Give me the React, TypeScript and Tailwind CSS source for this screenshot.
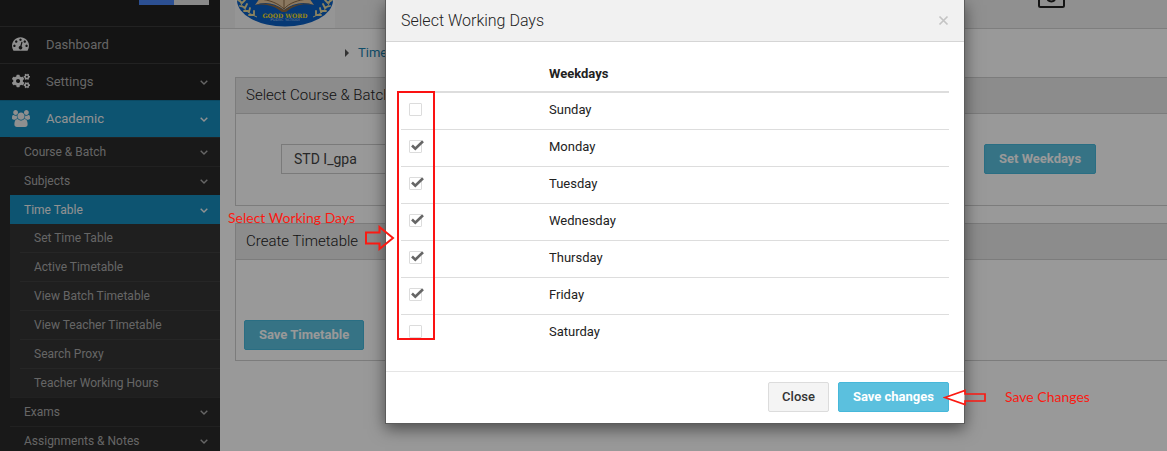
import React, { useState } from 'react';
import { FaCogs } from 'react-icons/fa';

const DAYS = ['Sunday', 'Monday', 'Tuesday', 'Wednesday', 'Thursday', 'Friday', 'Saturday'];

const TIMETABLE_LINKS = [
	'Set Time Table',
	'Active Timetable',
	'View Batch Timetable',
	'View Teacher Timetable',
	'Search Proxy',
	'Teacher Working Hours',
];

const Chevron: React.FC = () => (
	<svg className="h-[5px] w-[8px]" viewBox="0 0 8 5" fill="none" stroke="currentColor">
		<path d="M0.7 0.7L4 3.900 7.300 0.7" strokeWidth={1.4} />
	</svg>
);

const GaugeIcon: React.FC = () => (
	<svg className="h-[14px] w-[17px]" viewBox="0 256 1792 1408" fill="currentColor">
		<path d="M384 1152q0-53-37.5-90.5t-90.5-37.5-90.5 37.5-37.5 90.5 37.5 90.5 90.5 37.5 90.5-37.5 37.5-90.5zm192-448q0-53-37.5-90.5t-90.5-37.5-90.5 37.5-37.5 90.5 37.5 90.5 90.5 37.5 90.5-37.5 37.5-90.5zm428 481l101-382q6-26-7.5-48.5t-38.5-29.5-48 6.5-30 39.5l-101 382q-60 5-107 43.5t-63 98.5q-20 77 20 146t117 89 146-20 89-117q16-60-6-117t-72-91zm660-33q0-53-37.5-90.5t-90.5-37.5-90.5 37.5-37.5 90.5 37.5 90.5 90.5 37.5 90.5-37.5 37.5-90.5zm-640-640q0-53-37.5-90.5t-90.5-37.5-90.5 37.5-37.5 90.5 37.5 90.5 90.5 37.5 90.5-37.5 37.5-90.5zm448 192q0-53-37.5-90.5t-90.5-37.5-90.5 37.5-37.5 90.5 37.5 90.5 90.5 37.5 90.5-37.5 37.5-90.5zm320 448q0 261-141 483-19 29-54 29h-1402q-35 0-54-29-141-221-141-483 0-182 71-348t191-286 286-191 348-71 348 71 286 191 191 286 71 348z" />
	</svg>
);

const UsersIcon: React.FC = () => (
	<svg className="h-[17px] w-[18px]" viewBox="-64 0 1920 1792" fill="currentColor">
		<path d="M529 896q-162 5-265 128h-134q-82 0-138-40.5t-56-118.5q0-353 124-353 6 0 43.5 21t97.500 42.5 119 21.5q67 0 133-23-5 37-5 66 0 139 81 256zm1071 637q0 120-73 189.5t-194 69.5h-874q-121 0-194-69.5t-73-189.5q0-53 3.5-103.5t14-109 26.500-108.5 43-97.500 62-81 85.5-53.5 111.5-20q10 0 43 21.5t73 48 107 48 135 21.5 135-21.5 107-48 73-48 43-21.5q61 0 111.5 20t85.5 53.5 62 81 43 97.5 26.5 108.5 14 109 3.5 103.5zm-1024-1277q0 106-75 181t-181 75-181-75-75-181 75-181 181-75 181 75 75 181zm704 384q0 159-112.5 271.5t-271.5 112.5-271.5-112.5-112.5-271.5 112.5-271.5 271.5-112.5 271.5 112.5 112.5 271.5zm576 225q0 78-56 118.5t-138 40.5h-134q-103-123-265-128 81-117 81-256 0-29-5-66 66 23 133 23 59 0 119-21.5t97.5-42.5 43.5-21q124 0 124 353zm-128-609q0 106-75 181t-181 75-181-75-75-181 75-181 181-75 181 75 75 181z" />
	</svg>
);

interface MainItemProps {
	label: string;
	icon: React.ReactNode;
	active?: boolean;
	expandable?: boolean;
}

const MainItem: React.FC<MainItemProps> = ({ label, icon, active, expandable }) => (
	<a
		href="#"
		className={`flex h-[37px] items-center border-t pr-3 pl-3 text-[13px] ${active ? 'border-[#117aa5] bg-[#178dbd] text-[#f2f2f2]' : 'border-[#3a3a3a] bg-[#222] text-[#aaa]'}`}
	>
		<span className="w-[34px] pb-[2px] text-[#eee]">{icon}</span>
		<span className="flex-1">{label}</span>
		{expandable && <Chevron />}
	</a>
);

const SubItem: React.FC<{ label: string; active?: boolean }> = ({ label, active }) => (
	<a
		href="#"
		className={`ml-[10px] flex h-[29px] items-center border-t pr-3 pl-[14px] text-xs ${active ? 'border-[#178dbd] bg-[#178dbd] text-[#f2f2f2]' : 'border-[#383838] text-[#aaa]'}`}
	>
		<span className="flex-1">{label}</span>
		<Chevron />
	</a>
);

const Sidebar: React.FC = () => (
	<nav className="w-[220px] shrink-0 bg-[#2b2b2b]">
		<div className="flex h-[26px] items-start justify-end bg-[#222] pr-[11px]">
			<div className="h-[5px] w-[35px] bg-[#4a86f5]"></div>
			<div className="h-[5px] w-[35px] bg-[#e4e4e4]"></div>
		</div>
		<MainItem label="Dashboard" icon={<GaugeIcon />} />
		<MainItem label="Settings" icon={<FaCogs size={18} />} expandable />
		<MainItem label="Academic" icon={<UsersIcon />} active expandable />
		<SubItem label="Course & Batch" />
		<SubItem label="Subjects" />
		<SubItem label="Time Table" active />
		<div className="ml-[10px] bg-[#353535] pl-[10px]">
			{TIMETABLE_LINKS.map((item) => (
				<a
					key={item}
					href="#"
					className="flex h-[29px] items-center border-t border-[#404040] pl-[14px] text-xs text-[#aaa] first:h-[28px] first:border-t-0"
				>
					{item}
				</a>
			))}
		</div>
		<SubItem label="Exams" />
		<SubItem label="Assignments & Notes" />
	</nav>
);

const SchoolLogo: React.FC = () => (
	<svg className="h-[28px] w-[100px] bg-[#f9f9f9]" viewBox="0 0 100 28">
		<ellipse cx="50" cy="0" rx="48" ry="26.5" fill="#0a5fc4" />
		<path d="M20 5c10-4 20-2 29 5 9-7 20-9 30-5l-5-7H25z" fill="#e6c9a0" />
		<path d="M49 9C43 3 34 0 25-1M49 9c5-6 14-9 24-10M49 9V0" stroke="#8a6a48" fill="none" />
		<path d="M20 5c10-3 20-1 29 5 9-6 20-8 30-5-10-2-20 0-28 7h-4C40 6 30 3 20 5z" fill="#8f6b42" />
		<path
			d="M5 0c1 7 7 13 17 17M95 0c-1 7-7 13-17 17"
			stroke="#e8dba0"
			strokeWidth="1"
			fill="none"
		/>
		<path
			d="M3 0l3 2M10 0L7 3M5 6l4 1M12 4l-2 4M9 11l4 0M15 8l-1 4M14 15l4 0M19 11l0 4M97 0l-3 2M90 0l3 3M95 6l-4 1M88 4l2 4M91 11l-4 0M85 8l1 4M86 15l-4 0M81 11l0 4"
			stroke="#e8dba0"
			strokeWidth="1.8"
			strokeLinecap="round"
		/>
		<text x="50" y="17.5" textAnchor="middle" fontFamily="DejaVu Serif" fontWeight="bold" fontSize="6" fill="#ffe11a">
			GOOD WORD
		</text>
		<text x="50" y="21" textAnchor="middle" fontFamily="DejaVu Sans" fontSize="4.5" fill="#a9c4ee">
			Public School
		</text>
	</svg>
);

const Panel: React.FC<{ title: string; children: React.ReactNode }> = ({ title, children }) => (
	<section className="mb-[17px] ml-[15px] border-y border-l border-[#cfcfcf]">
		<h2 className="flex h-[36px] items-center border-b border-[#cfcfcf] bg-[#e9e9e9] px-[10px] text-[15px] font-light text-[#222]">
			{title}
		</h2>
		{children}
	</section>
);

const WorkingDaysDialog: React.FC = () => {
	const [selected, setSelected] = useState<string[]>(DAYS.slice(1, 6));

	const toggle = (day: string) => {
		setSelected(selected.includes(day) ? selected.filter((d) => d !== day) : [...selected, day]);
	};

	return (
		<div
			role="dialog"
			aria-labelledby="dialog-title"
			className="absolute top-0 left-[385px] w-[580px] border-x border-b border-[#5c5c5c] bg-white shadow-[0_5px_15px_rgba(0,0,0,0.5)]"
		>
			<header className="flex h-[42px] items-center justify-between border-b border-[#d5d5d5] bg-[#f1f1f1] px-[15px]">
				<h1 id="dialog-title" className="text-base font-light text-[#222]">
					Select Working Days
				</h1>
				<button aria-label="Close dialog" className="text-[#c4c4c4]">
					<svg className="h-[11px] w-[11px]" viewBox="0 0 11 11" stroke="currentColor" strokeWidth={1.7}>
						<path d="M1.5 1.5l8 8M9.5 1.5l-8 8" />
					</svg>
				</button>
			</header>

			<div className="px-[15px] pt-[14px] pb-5">
				<table className="w-full table-fixed border-collapse text-left text-[13px] leading-[18px] text-[#222]">
					<thead>
						<tr className="h-[36px] border-b-2 border-[#ddd]">
							<th className="w-[140px] p-2"></th>
							<th className="p-2 font-bold">Weekdays</th>
						</tr>
					</thead>
					<tbody>
						{DAYS.map((day) => (
							<tr key={day} className="h-[37px] border-b border-[#ddd] align-top last:border-b-0">
								<td className="px-2 pt-[10px]">
									<div className="relative h-[13px] w-[13px]">
										<input
											type="checkbox"
											id={day}
											checked={selected.includes(day)}
											onChange={() => toggle(day)}
											className="peer block h-[13px] w-[13px] appearance-none rounded-[1px] border border-[#dcdcdc] bg-white"
										/>
										<svg
											className="pointer-events-none absolute top-0 left-[2px] hidden h-[11px] w-[13px] peer-checked:block"
											viewBox="0 0 13 11"
											fill="none"
											stroke="#666"
										>
											<path d="M1 5.5l3.3 3.2L12 1.2" strokeWidth={2.6} />
										</svg>
									</div>
								</td>
								<td className="px-2 pt-2">
									<label htmlFor={day}>{day}</label>
								</td>
							</tr>
						))}
					</tbody>
				</table>
			</div>

			<footer className="flex justify-end gap-[9px] border-t border-[#e5e5e5] px-[15px] py-[10px] pb-[11px]">
				<button className="h-[30px] rounded-[2px] border border-[#dcdcdc] bg-[#f4f4f4] px-[13px] text-[13px] font-medium text-[#333]">
					Close
				</button>
				<button className="h-[30px] rounded-[2px] border border-[#46b8da] bg-[#5bc0de] px-[14px] text-[13px] font-bold text-white">
					Save changes
				</button>
			</footer>

			{/* Highlight around the tick boxes */}
			<div className="pointer-events-none absolute top-[91px] left-[11px] h-[249px] w-[38px] border-2 border-[#fb1212]"></div>
		</div>
	);
};

const App: React.FC = () => {
	return (
		<div className="relative flex h-screen overflow-hidden bg-white font-['Roboto',sans-serif]">
			<Sidebar />

			<main className="min-w-0 flex-1">
				<header className="flex h-[29px] justify-between border-b border-[#d2d2d2] bg-[#f0f0f0] pr-[102px] pl-[15px]">
					<SchoolLogo />
					<svg className="h-[8px] w-[27px]" viewBox="0 0 27 8" fill="none" stroke="#222">
						<path d="M1 0v5.500q0 1.500 1.500 1.500h22q1.500 0 1.500-1.500V0" strokeWidth={2} />
						<path d="M9.500 0q4 3 7.500 0" strokeWidth={2} />
					</svg>
				</header>

				<div className="flex h-12 items-center gap-[9px] pl-[125px] text-[13px]">
					<svg className="h-[8px] w-[4px]" viewBox="0 0 4 8" fill="#555">
						<path d="M0 0l4 4-4 4z" />
					</svg>
					<a href="#" className="text-[#1a82b0]">
						Timetable
					</a>
				</div>

				<Panel title="Select Course & Batch">
					<div className="flex h-[91px] items-start pt-[30px] pl-[45px]">
						<select
							aria-label="Course"
							className="h-[30px] w-[643px] shrink-0 appearance-none border border-[#ccc] bg-white px-3 text-sm text-[#444]"
						>
							<option>STD I_gpa</option>
						</select>
						<button className="ml-[60px] h-[30px] shrink-0 rounded-[2px] border border-[#46b8da] bg-[#5bc0de] px-[14px] text-[13px] font-bold text-white">
							Set Weekdays
						</button>
					</div>
				</Panel>

				<Panel title="Create Timetable">
					<div className="px-2 pt-[60px] pb-[10px]">
						<button className="h-[30px] rounded-[2px] border border-[#46b8da] bg-[#5bc0de] px-[14px] text-[13px] font-bold text-white">
							Save Timetable
						</button>
					</div>
				</Panel>
			</main>

			{/* Backdrop */}
			<div className="absolute inset-0 bg-black/40"></div>

			<WorkingDaysDialog />

			<p className="absolute top-[208px] left-[228px] font-['Lato',sans-serif] text-sm text-[#fb1a12]">
				Select Working Days
			</p>
			<svg
				className="absolute top-[225px] left-[364px] h-[26px] w-[31px]"
				viewBox="0 0 31 26"
				fill="none"
				stroke="#fb1a12"
				strokeWidth={2}
			>
				<path d="M2 7.500H15.500V2L29 13 15.500 24V18.500H2z" />
			</svg>

			<svg
				className="absolute top-[389px] left-[943px] h-[17px] w-[44px]"
				viewBox="0 0 44 17"
				stroke="#fb1a12"
				strokeWidth={1.7}
			>
				<path d="M3.500 8.500L21.500 2.500v12z" fill="#fff" stroke="none" />
				<path d="M2 8.500L22 1.500v3.500h20v7H22v3.500z" fill="none" />
			</svg>
			<p className="absolute top-[387px] left-[1005px] font-['Lato',sans-serif] text-sm text-[#fb1a12]">
				Save Changes
			</p>
		</div>
	);
};

export default App;
